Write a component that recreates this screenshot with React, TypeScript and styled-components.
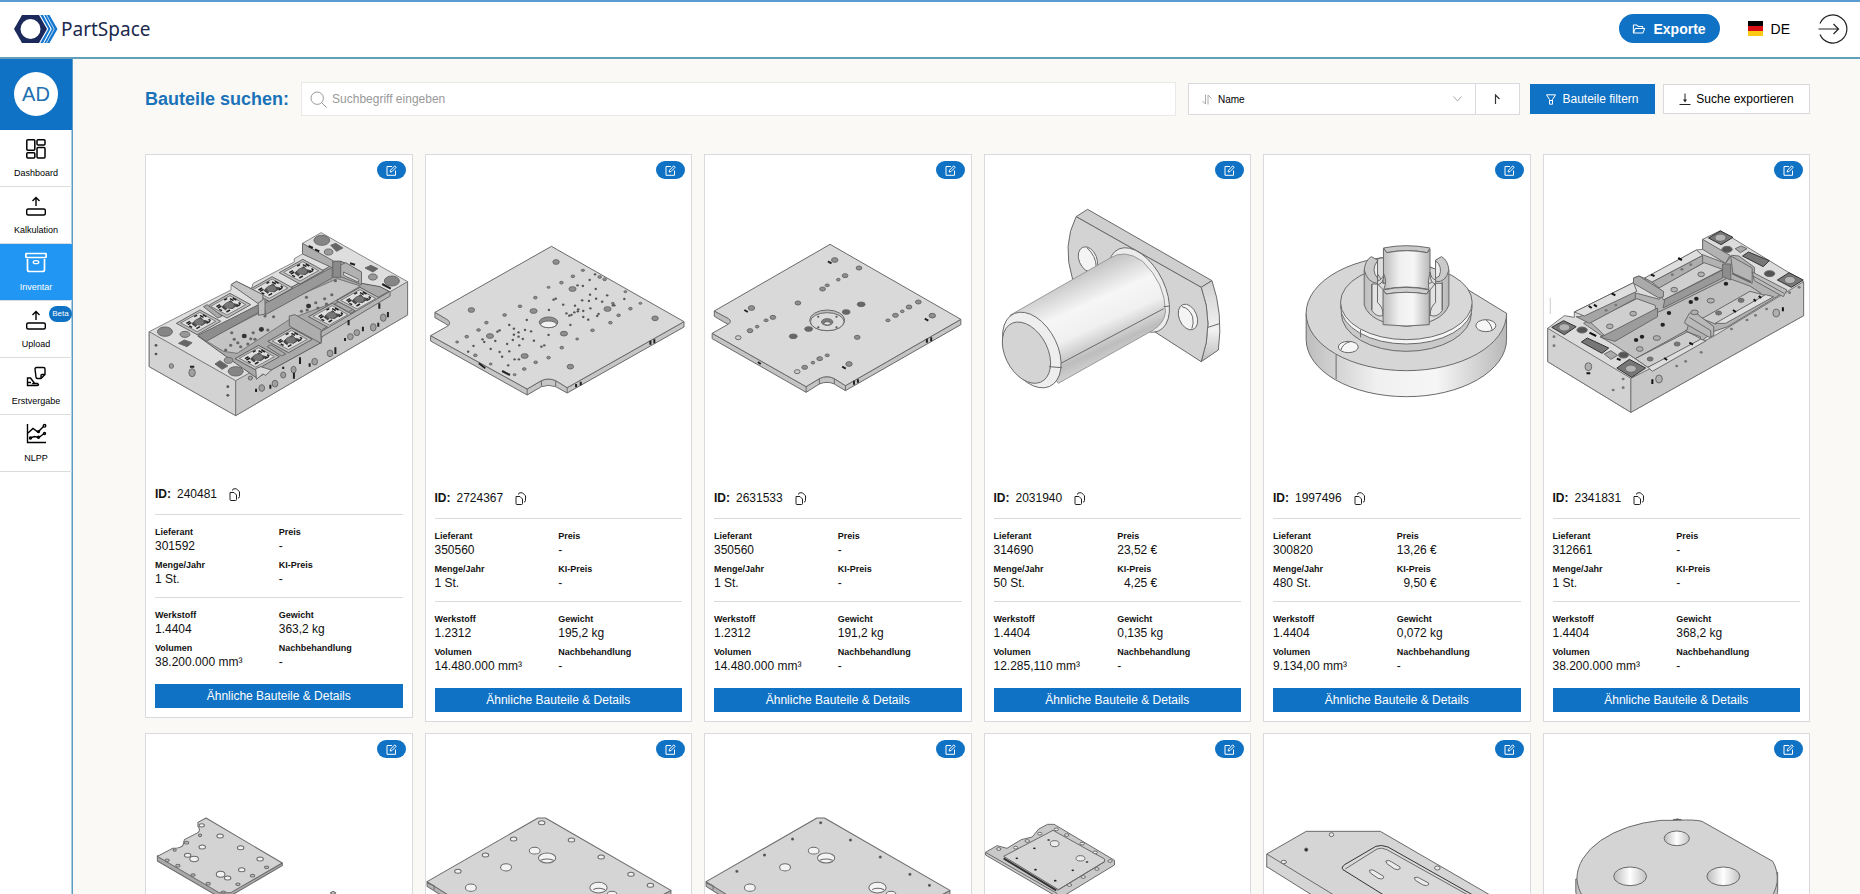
import React from "react";
import styled, { createGlobalStyle, css } from "styled-components";
import { AiOutlineFolderOpen } from "react-icons/ai";

const color = {
  primary: "#1072c4",
  active: "#2196f3",
  title: "#1a72b8",
  line: "#d9d9de",
  page: "#faf9f6",
  ink: "#111111",
  frame: "#5b9bc4",
};

const GlobalStyle = createGlobalStyle`
  *, *::before, *::after { box-sizing: border-box; }
  body {
    margin: 0;
    background: ${color.page};
    color: ${color.ink};
    font-family: "Liberation Sans", Arial, sans-serif;
    font-size: 12px;
  }
  button, input, select { font: inherit; color: inherit; }
  button { cursor: pointer; }
`;

/* ---------- page frame ---------- */

const Shell = styled.div`
  height: 100vh;
  display: flex;
  flex-direction: column;
`;

const Header = styled.header`
  flex: none;
  height: 59px;
  display: flex;
  align-items: center;
  justify-content: space-between;
  padding: 0 12px 2px 14px;
  background: #fff;
  border-top: 2px solid #5b9bd0;
  border-bottom: 2px solid #629fb9;
`;

const Brand = styled.a`
  display: flex;
  align-items: center;
  gap: 2px;
  color: #1b2a4e;
  font-family: "Noto Sans", sans-serif;
  font-size: 19px;
  line-height: 28px;
  text-decoration: none;
`;

const HeaderActions = styled.div`
  display: flex;
  align-items: center;
  gap: 28px;
`;

const ExportsButton = styled.button`
  display: flex;
  align-items: center;
  justify-content: center;
  gap: 7px;
  width: 101px;
  height: 29px;
  padding: 0;
  border: 0;
  border-radius: 15px;
  background: ${color.primary};
  color: #fff;
  font-size: 14px;
  font-weight: 700;
`;

const PlainButton = styled.button`
  display: flex;
  align-items: center;
  gap: 8px;
  padding: 0;
  border: 0;
  background: none;
  color: #000;
  font-size: 14px;
`;

const Body = styled.div`
  flex: 1;
  min-height: 0;
  display: flex;
`;

const Sidebar = styled.nav`
  flex: none;
  width: 73px;
  background: #fff;
  border-right: 1px solid ${color.frame};
  box-shadow: inset -1px 0 0 #a5cde4;
`;

const AvatarBox = styled.div`
  display: flex;
  align-items: center;
  justify-content: center;
  height: 71px;
  padding-bottom: 1px;
  background: ${color.primary};
`;

const Avatar = styled.div`
  width: 44px;
  height: 44px;
  border-radius: 50%;
  background: #fff;
  color: #2070b0;
  font-size: 20px;
  line-height: 44px;
  text-align: center;
`;

const NavLink = styled.a<{ $active?: boolean }>`
  position: relative;
  display: flex;
  flex-direction: column;
  align-items: center;
  gap: 7px;
  height: 57px;
  padding-top: 8px;
  border-bottom: 1px solid #dcdcdc;
  color: #000;
  font-size: 9px;
  line-height: 12px;
  text-decoration: none;
  ${(p) =>
    p.$active &&
    css`
      background: ${color.active};
      color: #fff;
    `}
`;

const BetaBadge = styled.span`
  position: absolute;
  top: 5px;
  right: 0;
  width: 23px;
  height: 16px;
  border-radius: 8px;
  background: ${color.primary};
  color: #fff;
  font-size: 8px;
  line-height: 16px;
  text-align: center;
`;

const Main = styled.main`
  flex: 1;
  min-width: 0;
  padding: 23px 50px 24px 72px;
  overflow-y: auto;
  scrollbar-width: none;
`;

/* ---------- toolbar ---------- */

const Toolbar = styled.form`
  display: flex;
  align-items: center;
  margin-bottom: 38px;
`;

const Title = styled.label`
  color: ${color.title};
  font-size: 18px;
  font-weight: 700;
`;

const SearchBox = styled.div`
  flex: 1;
  display: flex;
  align-items: center;
  gap: 5px;
  height: 34px;
  margin: 0 12px;
  padding: 0 8px;
  background: #fff;
  border: 1px solid #e9e9e9;
  color: #999;
`;

const SearchInput = styled.input`
  flex: 1;
  min-width: 0;
  padding: 0;
  border: 0;
  outline: 0;
  background: none;
  &::placeholder { color: #999; opacity: 1; }
`;

const SortGroup = styled.div`
  display: flex;
  height: 32px;
  margin-right: 10px;
`;

const SelectBox = styled.div`
  display: flex;
  align-items: center;
  gap: 6px;
  width: 288px;
  padding: 0 13px;
  background: #fff;
  border: 1px solid ${color.line};
  color: #aaa;
`;

const SortSelect = styled.select`
  flex: 1;
  appearance: none;
  padding: 0;
  border: 0;
  outline: 0;
  background: none;
  color: #000;
  font-size: 10px;
`;

const DirectionButton = styled.button`
  display: flex;
  align-items: center;
  justify-content: center;
  width: 44px;
  padding: 0;
  background: #fff;
  border: 1px solid ${color.line};
  border-left: 0;
`;

const ToolButton = styled.button<{ $primary?: boolean }>`
  display: flex;
  align-items: center;
  justify-content: center;
  gap: ${(p) => (p.$primary ? "6px" : "5px")};
  width: ${(p) => (p.$primary ? "125px" : "147px")};
  height: 30px;
  padding: 0;
  border: 1px solid ${(p) => (p.$primary ? color.primary : color.line)};
  background: ${(p) => (p.$primary ? color.primary : "#fff")};
  color: ${(p) => (p.$primary ? "#fff" : "#000")};
  & + & { margin-left: 8px; }
`;

/* ---------- part cards ---------- */

const Grid = styled.div`
  display: grid;
  grid-template-columns: repeat(6, minmax(0, 1fr));
  align-items: start;
  gap: 11px 12px;
`;

const Card = styled.article`
  position: relative;
  background: #fff;
  border: 1px solid ${color.line};
`;

const EditButton = styled.button`
  position: absolute;
  top: 6px;
  right: 6px;
  display: flex;
  align-items: center;
  justify-content: center;
  width: 29px;
  height: 18px;
  padding: 0;
  border: 0;
  border-radius: 9px;
  background: ${color.primary};
  color: #fff;
`;

const Drawing = styled.svg<{ $compact?: boolean }>`
  display: block;
  width: 100%;
  height: ${(p) => (p.$compact ? "308px" : "312px")};
  stroke: #6a6a6a;
  stroke-linejoin: round;
  * { vector-effect: non-scaling-stroke; }
`;

const CardBody = styled.div`
  padding: 20px 9px 9px;
`;

const IdRow = styled.div`
  display: flex;
  align-items: center;
  gap: 6px;
  height: 32px;
  padding-bottom: 9px;
  border-bottom: 1px solid ${color.line};
`;

const CopyButton = styled.button`
  display: flex;
  margin-left: 6px;
  padding: 0;
  border: 0;
  background: none;
`;

const Facts = styled.dl<{ $last?: boolean }>`
  display: grid;
  grid-template-columns: 1fr 1fr;
  row-gap: 5px;
  margin: 0;
  padding: 10px 0 ${(p) => (p.$last ? "15px" : "11px")};
  border-bottom: ${(p) => (p.$last ? "0" : `1px solid ${color.line}`)};
  line-height: 14px;
`;

const Fact = styled.div``;

const FactName = styled.dt`
  font-size: 9px;
  font-weight: 700;
`;

const FactValue = styled.dd`
  margin: 0;
  white-space: pre;
`;

const DetailsButton = styled.button`
  display: block;
  width: 100%;
  height: 24px;
  padding: 0;
  border: 0;
  background: ${color.primary};
  color: #fff;
`;

/* ---------- icons ---------- */

const LogoIcon = () => (
  <svg width="45" height="30" viewBox="0 0 45 30" aria-hidden="true">
    <path d="M8 1H25L33 15L25 29H8L0 15Z" fill="#1b2a5a" />
    <circle cx="16.500" cy="15" r="10" fill="#fff" />
    <path d="M26.300 1H29L36.500 15L29 29H26.300L34.300 15Z" fill="#1477cf" />
    <path d="M30.200 1H35.500L43.500 15L35.500 29H30.200L37.800 15Z" fill="#1477cf" />
    <path d="M32.500 1L40.200 15L32.500 29" fill="none" stroke="#fff" strokeWidth="0.700" />
  </svg>
);

const DashboardIcon = () => (
  <svg width="22" height="22" viewBox="0 0 22 22" fill="none" stroke="currentColor" strokeWidth="1.500" aria-hidden="true">
    <rect x="1.800" y="1.800" width="8" height="10.500" rx="1" />
    <rect x="12" y="1.800" width="8" height="5.200" rx="1" />
    <rect x="12" y="9.400" width="8" height="10.600" rx="1" />
    <rect x="1.800" y="14.700" width="8" height="5.300" rx="1" />
  </svg>
);

const UploadIcon = () => (
  <svg width="22" height="22" viewBox="0 0 22 22" fill="none" stroke="currentColor" strokeWidth="1.400" aria-hidden="true">
    <rect x="1.700" y="14" width="18.600" height="6" rx="1.500" />
    <path d="M11 11V2.500M7.500 6L11 2.500L14.500 6" />
  </svg>
);

const ArchiveIcon = () => (
  <svg width="22" height="22" viewBox="0 0 22 22" fill="none" stroke="currentColor" strokeWidth="1.700" aria-hidden="true">
    <rect x="0.900" y="1.500" width="20.200" height="4" rx="0.500" />
    <path d="M2.500 7V17.500Q2.500 19.500 4.500 19.500H17.500Q19.500 19.500 19.500 17.500V7" />
    <ellipse cx="11" cy="10.200" rx="2.800" ry="1.500" strokeWidth="1.300" />
  </svg>
);

const AwardIcon = () => (
  <svg width="22" height="22" viewBox="0 0 22 22" fill="none" stroke="currentColor" strokeWidth="1.400" aria-hidden="true">
    <path d="M11.500 1.500H18.500Q20 1.500 20 3V8.500L16 12.500H12.500Q11 12.500 11 11L10 3Q10 1.500 11.500 1.500ZM20 8.500H17Q16 8.500 16 9.500V12.500" />
    <path d="M2.500 12V19.500H12.500Q13.500 19.500 13.500 18.500L12.500 17.500H8L9 16.500L5.500 12ZM2.500 16.500H6" />
  </svg>
);

const TrendIcon = () => (
  <svg width="22" height="22" viewBox="0 0 22 22" fill="none" stroke="currentColor" strokeWidth="1.400" aria-hidden="true">
    <path d="M2.500 1V19.500H21" />
    <path d="M3 10L8 5.500L13 9L18.500 3.500" />
    <path d="M5 15L9.500 13.500L14 14.500L19 10.500" />
    <circle cx="19.500" cy="2.800" r="1.300" />
    <circle cx="13.500" cy="8.600" r="1" />
    <circle cx="5.500" cy="15" r="1" />
    <circle cx="13.500" cy="14.200" r="1" />
    <circle cx="19.500" cy="10.500" r="1" />
  </svg>
);

const LogoutIcon = () => (
  <svg width="30" height="30" viewBox="0 0 30 30" fill="none" stroke="#222" strokeWidth="1.200" aria-hidden="true">
    <path d="M2 9.500A14 14 0 1 1 2 20.500" />
    <path d="M0.500 15H20.500M15.500 10L20.500 15L15.500 20" />
  </svg>
);

const FlagIcon = () => (
  <svg width="15" height="15" viewBox="0 0 15 15" aria-hidden="true">
    <path d="M0 0H15V5H0Z" fill="#000" />
    <path d="M0 5H15V10H0Z" fill="#d80f16" />
    <path d="M0 10H15V15H0Z" fill="#fcc914" />
  </svg>
);

const SearchIcon = () => (
  <svg width="17" height="17" viewBox="0 0 17 17" fill="none" stroke="currentColor" aria-hidden="true">
    <circle cx="7.200" cy="7.200" r="6.200" />
    <path d="M11.700 11.700L16.500 16.500" />
  </svg>
);

const SortIcon = () => (
  <svg width="10" height="11" viewBox="0 0 10 11" fill="none" stroke="currentColor" aria-hidden="true">
    <path d="M3.500 0.500V10L0.500 7M6 10.500V1L9.500 4.500" />
  </svg>
);

const ChevronIcon = () => (
  <svg width="9" height="6" viewBox="0 0 9 6" fill="none" stroke="currentColor" aria-hidden="true">
    <path d="M0.500 0.500L4.500 5L8.500 0.500" />
  </svg>
);

const AscendingIcon = () => (
  <svg width="7" height="10" viewBox="0 0 7 10" fill="none" stroke="#333" strokeWidth="1.200" aria-hidden="true">
    <path d="M1.500 10V1L5.500 5" />
  </svg>
);

const FilterIcon = () => (
  <svg width="10" height="11" viewBox="0 0 10 11" fill="none" stroke="currentColor" aria-hidden="true">
    <path d="M0.500 0.800H9.500L6.500 5.500V10.200H3.500V5.500ZM3.500 6.500H6.500" />
  </svg>
);

const DownloadIcon = () => (
  <svg width="12" height="13" viewBox="0 0 12 13" fill="none" stroke="#222" aria-hidden="true">
    <path d="M6 0.500V8M0.500 11.500H11.500" />
    <path d="M4 6.500H8L6 9.500Z" fill="#222" stroke="none" />
  </svg>
);

const EditIcon = () => (
  <svg width="11" height="11" viewBox="0 0 11 11" fill="none" stroke="currentColor" aria-hidden="true">
    <path d="M6 1.500H1V10.300H9.500V5.500" />
    <path d="M4.200 7L4.500 5.200L8.700 0.900L10.200 2.300L6 6.600Z" />
  </svg>
);

const CopyIcon = () => (
  <svg width="12" height="13" viewBox="0 0 12 13" fill="none" stroke="#222" aria-hidden="true">
    <path d="M1 4.500H5L7.500 7V11.500Q7.500 12.500 6.500 12.500H2Q1 12.500 1 11.500Z" />
    <path d="M3.500 2.500Q3.500 0.800 5 0.800H7.500L10.500 3.800V8.500Q10.500 10 9 10" />
  </svg>
);

/* ---------- technical drawings ---------- */

type Hole = [number, number, number, number];

const Holes = ({ items, fill = "#8f8f8f" }: { items: Hole[]; fill?: string }) => (
  <g fill={fill}>
    {items.map(([x, y, rx, ry], i) => (
      <ellipse key={i} cx={x} cy={y} rx={rx} ry={ry} />
    ))}
  </g>
);

const Dots = ({ points, r = 3, fill = "#555" }: { points: number[][]; r?: number; fill?: string }) => (
  <g fill={fill} stroke="none">
    {points.map(([x, y], i) => (
      <circle key={i} cx={x} cy={y} r={r} />
    ))}
  </g>
);

const Insert = ({ x, y }: { x: number; y: number }) => (
  <g transform={`translate(${x} ${y})`} strokeWidth="0.800">
    <path d="M-62 6L4 -34L62 0L-4 40Z" fill="#bdbdbd" stroke="#4a4a4a" />
    <path d="M-50 5L4 -27L48 0L-4 31Z" fill="#dedede" stroke="#666" />
    <path d="M-14 2L6 -12L14 -3L26 0L10 12L-4 8L-8 16L-18 8Z" fill="#4a4a4a" stroke="#333" />
    <ellipse cx="2" cy="2" rx="13" ry="9" fill="#777" />
    <path d="M-34 6L-24 0M-30 10L-20 4M4 -18L14 -12M12 -20L22 -14M22 6L32 0M-6 22L4 16M28 -6L34 -2M-12 -14L-4 -18M-26 14L-18 18" stroke="#222" strokeWidth="1.500" />
  </g>
);

const MouldBase = () => (
  <Drawing $compact viewBox="45 15 743 924" preserveAspectRatio="none" role="img" aria-label="Bauteil 240481">
    <path d="M54 545L150 492L283 420V404L298 394L340 416L345 400L460 336V326L483 312V280L535 248L777 395V495L296 797L54 650Z" fill="#dedede" stroke="#888" />
    <path d="M54 545L296 692V797L54 650Z" fill="#d3d3d3" stroke="#777" />
    <path d="M296 692L355 657L535 545L777 395V495L296 797Z" fill="#c6c6c6" stroke="#777" />
    <path d="M190 558L375 456L555 352L566 334H590L604 340L648 366V400L700 410L725 424L540 538L535 578L355 684L296 640Z" fill="#a9a9a9" stroke="#5a5a5a" />
    <path d="M212 572L368 486L580 386L645 408L560 462L450 506L300 610L262 604Z" fill="#c4c4c4" stroke="#777" />
    <path d="M190 556L365 462V484L214 574Z" fill="#8d8d8d" />
    <path d="M375 462L566 352V384L380 494Z" fill="#999" />
    <Insert x={192} y={514} />
    <Insert x={276} y={464} />
    <Insert x={394} y={414} />
    <Insert x={480} y={362} />
    <Insert x={640} y={446} />
    <Insert x={562} y={494} />
    <Insert x={448} y={568} />
    <Insert x={356} y={620} />
    <path d="M358 440L378 448V492L360 496Z" fill="#bdbdbd" />
    <path d="M283 404L298 394L372 434V450L358 460Z" fill="#c4c4c4" />
    <path d="M483 280L568 332V354L483 312Z" fill="#adadad" />
    <path d="M568 334H590V382H568Z" fill="#8b8b8b" />
    <path d="M590 345L604 338L648 366V404L590 380Z" fill="#b1b1b1" />
    <path d="M598 366L640 388V397L598 376Z" fill="#dcdcdc" />
    <path d="M446 498L462 494L535 540V580L446 528Z" fill="#adadad" />
    <path d="M535 545L728 424V438L535 562Z" fill="#b4b4b4" />
    <path d="M206 470L216 464L258 498L246 504ZM572 462L584 456L624 478L612 486ZM384 590L394 584L436 612L424 618Z" fill="#aaa" />
    <path d="M352 656L366 650L396 660L380 676L372 672L354 688Z" fill="#d8d8d8" />
    <Holes items={[[98, 545, 21, 14], [537, 271, 22, 15], [733, 393, 21, 15], [296, 664, 21, 14]]} fill="#858585" />
    <Holes items={[[154, 553, 14, 9], [276, 631, 12, 9], [556, 306, 12, 9], [680, 381, 12, 9]]} fill="#999" />
    <path d="M136 580L152 570L174 578L160 590ZM238 642L252 632L274 648L258 658ZM562 286L576 280L596 294L578 304ZM658 354L674 346L694 356L680 366Z" fill="#666" />
    <Holes items={[[116, 648, 6, 7], [174, 668, 9, 12], [369, 714, 8, 10], [406, 701, 8, 10], [429, 675, 7, 9], [458, 659, 7, 10], [517, 635, 8, 10], [560, 610, 8, 10], [617, 560, 8, 9], [635, 548, 8, 9], [681, 532, 8, 11], [709, 503, 8, 11], [337, 684, 6, 6]]} fill="#a0a0a0" />
    <Dots r={4} fill="#555" points={[[73, 586], [73, 612], [274, 710], [274, 736]]} />
    <path d="M353 716V726M393 704V716M476 622V642M459 668V686M429 650V657M503 640V650M575 592V612M602 564V573M612 510V526M652 530V544M695 518V530M698 460V476M722 486V502M168 650H180M500 288L512 294M518 298L530 304M616 340L630 344M706 402L730 416" stroke="#222" strokeWidth="2" />
    <Dots r={4.5} fill="#666" points={[[285, 548], [302, 578], [318, 558], [330, 582], [345, 548], [367, 540], [386, 540], [268, 600], [282, 586], [310, 590], [292, 568], [402, 500], [378, 498], [480, 484], [496, 480], [500, 466], [520, 458], [545, 446], [565, 434], [550, 462], [494, 442], [526, 474], [575, 392], [338, 566], [350, 568]]} />
    <Dots r={7} fill="#333" points={[[320, 558], [500, 468], [368, 538]]} />
  </Drawing>
);

const PerforatedPlate = () => (
  <Drawing viewBox="827 15 743 936" preserveAspectRatio="none" role="img" aria-label="Bauteil 2724367">
    <path d="M852 487L895 512V530L878 519L852 503Z" fill="#bdbdbd" />
    <path d="M840 557V573L1110 735L1150 710Q1170 702 1190 710L1222 729L1549 531V515L1222 713L1190 692Q1170 682 1150 692L1110 717Z" fill="#c6c6c6" />
    <path d="M1178 289L1549 515L1222 713L1190 692Q1170 682 1150 692L1110 717L840 557L888 528Q898 520 888 510L852 487Z" fill="#d9d9d9" />
    <path d="M1110 717V735M1222 713V729M1150 692V708M1190 692V708" />
    <ellipse cx="1170" cy="517" rx="26" ry="16" fill="#8c8c8c" />
    <ellipse cx="1170" cy="523" rx="22" ry="10" fill="#f2f2f2" />
    <Holes items={[[1191, 336, 9, 7], [954, 480, 9, 7], [1468, 505, 9, 7], [1231, 650, 9, 7], [1237, 417, 10, 7], [1335, 477, 10, 7], [1128, 483, 10, 7], [1006, 558, 10, 7], [1213, 551, 10, 7], [1103, 618, 10, 7]]} />
    <Holes items={[[1133, 443, 5, 4], [1090, 469, 5, 4], [1047, 495, 5, 4], [996, 518, 5, 4], [974, 540, 5, 4], [941, 560, 5, 4], [914, 576, 4, 3], [1266, 361, 5, 3], [1238, 379, 5, 4], [1206, 398, 5, 4], [1170, 412, 4, 3], [1313, 381, 5, 4], [1327, 388, 5, 4], [1385, 425, 4, 3], [1427, 460, 4, 3], [1399, 476, 5, 4], [1366, 496, 5, 4], [1343, 518, 5, 4], [1293, 541, 5, 4], [1250, 567, 4, 3], [1207, 593, 5, 4], [1170, 623, 5, 4], [1134, 637, 5, 4], [1102, 657, 5, 4], [965, 616, 5, 4], [1008, 642, 4, 3], [1075, 674, 4, 3], [1350, 460, 4, 3]]} />
    <Dots r={3.5} points={[[1300, 373], [1285, 390], [1266, 408], [1251, 406], [1302, 417], [1334, 436], [1303, 446], [1283, 453], [1264, 451], [1244, 467], [1253, 478], [1267, 483], [1287, 475], [1310, 492], [1306, 498], [1281, 509], [1267, 501], [1220, 490], [1234, 495], [1252, 484], [1211, 464], [1190, 446], [1184, 449], [1171, 480], [1109, 510], [1231, 525], [1320, 455], [1350, 466], [1354, 466], [1382, 447], [1286, 434], [1060, 525], [1033, 541], [1027, 545], [1073, 536], [1086, 547], [1104, 540], [1121, 544], [1073, 554], [1086, 560], [1098, 567], [1070, 570], [1054, 582], [1088, 586], [1129, 572], [1158, 586], [1150, 590], [1008, 597], [1033, 606], [1040, 620], [1060, 604], [1075, 628], [1087, 628], [1057, 646], [985, 568], [990, 576], [960, 588], [945, 605], [1170, 555], [1242, 487], [1228, 497], [1021, 573]]} />
    <path d="M975 640L993 655M1040 663L1062 675M1455 572V584M1466 568V580M1247 702V712M1260 695V706" stroke="#222" strokeWidth="2" />
  </Drawing>
);

const CentredPlate = () => (
  <Drawing viewBox="42 15 743 936" preserveAspectRatio="none" role="img" aria-label="Bauteil 2631533">
    <path d="M68 483L114 508V526L98 518L68 499Z" fill="#bdbdbd" />
    <path d="M62 550V566L325 727L362 702Q384 692 404 702L435 722L758 524V508L435 707L404 686Q384 674 362 686L325 710Z" fill="#c4c4c4" />
    <path d="M392 283L758 508L435 707L404 686Q384 674 362 686L325 710L62 550L108 522Q118 514 108 506L68 483Z" fill="#d9d9d9" />
    <path d="M325 710V727M435 707V722M362 686V702M404 686V702" />
    <ellipse cx="384" cy="511" rx="49" ry="31" fill="#bfbfbf" />
    <ellipse cx="384" cy="515" rx="47" ry="27" fill="#dcdcdc" />
    <ellipse cx="384" cy="516" rx="16" ry="10" fill="#7c7c7c" />
    <ellipse cx="384" cy="520" rx="9" ry="5" fill="#e8e8e8" />
    <Holes items={[[405, 330, 9, 7], [172, 474, 9, 7], [678, 497, 9, 7], [445, 642, 9, 7], [473, 354, 8, 6], [434, 377, 8, 6], [371, 417, 8, 6], [232, 502, 8, 6], [168, 542, 8, 6], [639, 456, 8, 6], [613, 471, 8, 6], [575, 496, 8, 6], [363, 626, 8, 6], [321, 652, 8, 6], [468, 562, 8, 6], [302, 459, 8, 6]]} />
    <Holes fill="#ccc" items={[[135, 563, 8, 6], [300, 665, 8, 6]]} />
    <Holes fill="#666" items={[[479, 463, 11, 7], [437, 486, 11, 7], [332, 537, 11, 7], [289, 559, 11, 7]]} />
    <Holes items={[[415, 389, 5, 4], [384, 406, 6, 4], [213, 511, 6, 4], [188, 530, 5, 4], [594, 484, 5, 4], [554, 511, 6, 4], [384, 616, 6, 4], [344, 638, 5, 4]]} />
    <Dots r={3} points={[[359, 500], [410, 500], [359, 532], [410, 532]]} />
    <path d="M386 334L396 340M152 480L162 486M657 506L667 512M426 650L436 656M190 636L198 642M663 566V578M675 562V574M459 692V704M470 688V698" stroke="#222" strokeWidth="2" />
  </Drawing>
);

const FlangePin = () => (
  <Drawing viewBox="825 15 743 936" preserveAspectRatio="none" role="img" aria-label="Bauteil 2031940">
    <defs>
      <linearGradient id="pin-body" gradientUnits="userSpaceOnUse" x1="1040" y1="390" x2="1160" y2="640">
        <stop offset="0" stopColor="#c4c4c4" />
        <stop offset="0.350" stopColor="#f6f6f6" />
        <stop offset="0.600" stopColor="#f0f0f0" />
        <stop offset="0.850" stopColor="#bdbdbd" />
        <stop offset="1" stopColor="#d2d2d2" />
      </linearGradient>
      <linearGradient id="pin-edge" x1="0" y1="0" x2="0" y2="1">
        <stop offset="0" stopColor="#d0d0d0" />
        <stop offset="0.600" stopColor="#f2f2f2" />
        <stop offset="1" stopColor="#bcbcbc" />
      </linearGradient>
    </defs>
    <path d="M1080 200L1112 178L1460 392L1430 412Z" fill="#cfcfcf" />
    <path d="M1430 412L1460 392Q1492 490 1478 600L1430 635Q1468 520 1430 412Z" fill="url(#pin-edge)" />
    <path d="M1080 200L1430 412Q1468 520 1430 635L1070 387Q1040 285 1080 200Z" fill="#d3d3d3" />
    <path d="M1449 532L1481 521" />
    <ellipse cx="1113" cy="328" rx="25" ry="39" transform="rotate(-20 1113 328)" fill="#f4f4f4" />
    <path d="M1110 293Q1136 318 1136 350" fill="none" />
    <ellipse cx="1393" cy="501" rx="25" ry="40" transform="rotate(-20 1393 501)" fill="#f4f4f4" />
    <path d="M1376 470Q1396 474 1406 500Q1410 520 1404 536" fill="none" />
    <ellipse cx="1255" cy="420" rx="73" ry="135" transform="rotate(-24 1255 420)" fill="#ececec" />
    <path d="M895 496L1172 326Q1215 294 1266 334Q1330 400 1330 486Q1326 520 1296 540L1030 700Z" fill="url(#pin-body)" stroke="#999" />
    <path d="M1020 650L1325 476M1325 470L1342 468" fill="none" />
    <ellipse cx="956" cy="600" rx="72" ry="120" transform="rotate(-24 956 600)" fill="#eeeeee" />
    <ellipse cx="941" cy="608" rx="60" ry="97" transform="rotate(-24 941 608)" fill="#d4d4d4" />
    <path d="M1004 650L1040 653" />
  </Drawing>
);

const CollarDisc = () => (
  <Drawing viewBox="38 15 718 936" preserveAspectRatio="none" role="img" aria-label="Bauteil 1997496">
    <defs>
      <linearGradient id="disc-side">
        <stop offset="0" stopColor="#bdbdbd" />
        <stop offset="0.350" stopColor="#f0f0f0" />
        <stop offset="0.650" stopColor="#f6f6f6" />
        <stop offset="1" stopColor="#b8b8b8" />
      </linearGradient>
    </defs>
    <path d="M152 490V568A271 172 0 0 0 694 568V490Z" fill="url(#disc-side)" />
    <path d="M694 490A271 172 0 0 1 152 490A271 172 0 0 1 440 318Z" fill="#d6d6d6" />
    <path d="M233 614V688" />
    <ellipse cx="423" cy="490" rx="176" ry="114" fill="#c9c9c9" />
    <ellipse cx="423" cy="470" rx="178" ry="112" fill="#f5f5f5" />
    <ellipse cx="423" cy="457" rx="178" ry="112" fill="#d8d8d8" />
    <path d="M299 540V562" />
    <path d="M309 360V465Q325 520 423 529Q520 520 538 465V360L487 400H360Z" fill="url(#disc-side)" />
    <path d="M345 328Q360 320 362 326V400L345 372Z" fill="#ddd" />
    <path d="M361 294Q423 280 487 294L480 308Q423 296 370 308Z" fill="#c8c8c8" />
    <path d="M361 294L370 308Q423 296 480 308L487 298V372Q480 390 484 418Q423 404 362 418Q372 390 361 372Z" fill="url(#disc-side)" />
    <path d="M309 360Q312 330 328 320L345 330V400Q318 398 309 360ZM538 360Q535 330 518 320L502 330V395Q530 398 538 360Z" fill="#cacaca" />
    <path d="M345 332Q326 360 345 385ZM502 332Q522 350 512 378L502 385Z" fill="#eee" />
    <path d="M362 378Q360 402 345 404V393Q358 390 362 372ZM487 372Q488 400 502 402V390Q490 386 487 366Z" fill="#ddd" />
    <path d="M330 402H345L361 420V496Q344 504 330 482ZM487 420L502 400H520V482Q506 504 487 496Z" fill="#e3e3e3" />
    <path d="M329 402V480M345 402V458Q360 470 360 496M502 400V458Q488 470 487 496M520 395V480" fill="none" />
    <path d="M360 420Q423 404 485 420L478 432Q423 422 368 432Z" fill="#cfcfcf" />
    <path d="M360 420L368 432Q423 422 478 432L485 420V524Q423 532 360 524Z" fill="url(#disc-side)" />
    <ellipse cx="266" cy="591" rx="27" ry="17" fill="#f6f6f6" />
    <path d="M246 601Q250 580 272 575" fill="none" />
    <ellipse cx="638" cy="527" rx="27" ry="18" fill="#f6f6f6" />
    <path d="M655 540Q652 520 638 510" fill="none" />
    <path d="M65 960V972" stroke="#999" />
  </Drawing>
);

const PocketBase = () => (
  <Drawing viewBox="793 15 718 936" preserveAspectRatio="none" role="img" aria-label="Bauteil 2341831">
    <path d="M803 535L848 497L875 502V486L1035 398V384L1050 378L1068 386L1205 300L1222 298V268L1270 242L1495 395V497L1028 787L803 635Z" fill="#dcdcdc" stroke="#777" />
    <path d="M803 535L1028 685V787L803 635Z" fill="#d2d2d2" stroke="#777" />
    <path d="M1028 685L1250 560L1495 395V497L1028 787Z" fill="#c7c7c7" stroke="#777" />
    <path d="M900 520L1045 430L1105 448L1112 432L1065 388L1222 314L1284 340L1300 316L1320 318L1362 352V380L1446 424L1290 530L1250 545L1216 576L1074 652Z" fill="#b2b2b2" />
    <path d="M945 560L1115 480L1290 384L1350 408L1380 430L1256 520L1190 490L1180 540L1040 626L985 586Z" fill="#c1c1c1" />
    <path d="M918 516L1044 446L1094 466V486L960 560Z" fill="#cfcfcf" />
    <path d="M890 500L1040 424V446L916 520L880 500Z" fill="#a5a5a5" />
    <path d="M1100 414L1226 338L1276 358L1116 450Z" fill="#cfcfcf" />
    <path d="M1085 396L1222 316V340L1104 414Z" fill="#adadad" />
    <path d="M1120 448L1276 360V384L1115 474Z" fill="#999" />
    <path d="M946 562L1100 474V500L985 574Z" fill="#9c9c9c" />
    <path d="M1040 626L1180 546L1216 560V574L1074 652Z" fill="#cdcdcd" />
    <path d="M1220 506L1350 424L1392 436L1256 522Z" fill="#cdcdcd" />
    <path d="M1035 384L1050 378L1116 424V440L1104 444L1035 400Z" fill="#aaa" />
    <path d="M1174 514L1186 490L1200 486L1252 530V556L1240 562L1174 520Z" fill="#b9b9b9" />
    <path d="M1186 502L1244 542V562M1174 540L1216 566" fill="none" />
    <path d="M1276 342H1298V390L1276 380Z" fill="#8d8d8d" />
    <path d="M1298 318L1356 354V400L1304 372Z" fill="#b5b5b5" />
    <path d="M1302 370L1352 396" strokeWidth="2" />
    <path d="M1222 268L1296 316L1284 340L1222 298Z" fill="#b2b2b2" />
    <path d="M1356 366L1450 420L1440 440L1362 392Z" fill="#bcbcbc" />
    <path d="M1358 378L1442 430" />
    <path d="M875 486L1035 398L1044 424L902 498Z" fill="#dedede" />
    <path d="M1065 384L1205 300L1222 316L1085 396Z" fill="#dedede" />
    <path d="M1256 520L1392 434L1414 440L1284 520Z" fill="#dedede" />
    <path d="M1074 652L1216 568L1232 572L1086 664Z" fill="#dedede" />
    <g fill="#777" stroke="#333">
      <path d="M1238 264L1270 243L1304 262L1272 284ZM1424 390L1456 368L1494 390L1462 412ZM814 532L846 512L880 530L848 554ZM990 654L1024 628L1068 654L1030 682Z" />
      <path d="M1330 318L1346 306L1402 332L1386 350ZM894 576L910 564L968 594L950 610Z" />
    </g>
    <Holes fill="#b3b3b3" items={[[1270, 263, 15, 11], [1458, 390, 15, 11], [848, 532, 15, 11], [1028, 656, 15, 11]]} />
    <Holes fill="#555" items={[[1288, 298, 14, 9], [1403, 371, 14, 9], [896, 540, 14, 9], [1008, 615, 13, 9]]} />
    <path d="M1310 296L1326 288L1342 296L1324 308ZM956 612L974 602L992 616L974 628Z" fill="#aaa" />
    <Holes fill="#b0b0b0" items={[[1218, 373, 9, 7], [1145, 419, 9, 7], [1034, 491, 9, 7], [971, 529, 9, 7], [1244, 452, 10, 7], [1098, 564, 10, 7], [1052, 597, 9, 7], [1200, 487, 10, 7], [913, 650, 9, 12], [1421, 489, 9, 12], [1104, 687, 9, 12]]} />
    <Holes fill="#777" items={[[1265, 489, 8, 6], [1326, 451, 8, 6], [1153, 582, 8, 6], [1080, 627, 8, 6]]} />
    <Dots r={6} fill="#222" points={[[1285, 401], [1205, 446], [1190, 456], [1131, 489], [1114, 524], [1058, 560], [1042, 570]]} />
    <Dots r={4} fill="#777" points={[[820, 560], [820, 587], [1007, 687], [1007, 713], [980, 720], [1152, 648], [1176, 634], [1218, 607], [1300, 537], [1342, 510], [1365, 496], [1395, 477], [1457, 428], [1483, 412], [987, 465], [961, 481], [1140, 374], [1166, 358], [1190, 344]]} />
    <path d="M908 670H918M1086 688V702M1439 472V484M976 430L986 436M914 468L922 474M928 464L936 470M1082 374L1092 378M1156 324L1166 330M1360 448L1366 454M1374 438L1380 444M1304 480L1312 486M1186 578L1196 584M1118 624L1126 630M916 548L934 558M990 626L1000 630" stroke="#111" strokeWidth="2" />
    <path d="M810 443V492" stroke="#ccc" />
  </Drawing>
);

const NotchedPlate = () => (
  <Drawing viewBox="29 45 491 936" preserveAspectRatio="none" role="img" aria-label="Bauteil mit Aussparung">
    <path d="M50 410V426L160 530H186L281 440V432L175 515Z" fill="#a9a9a9" />
    <path d="M140 297L281 432L186 521H164L50 412L78 388Q96 388 98 376L100 362L126 340Q130 330 125 322V310Z" fill="#d3d3d3" />
    <Holes fill="#f2f2f2" items={[[166, 351, 6, 6], [133, 384, 6, 6], [204, 386, 6, 6], [106, 409, 6, 6], [118, 420, 8, 8], [240, 420, 6, 6], [206, 452, 6, 6], [167, 466, 8, 9], [180, 477, 6, 6], [132, 319, 5, 5]]} />
    <Holes fill="#bbb" items={[[129, 349, 3, 4], [104, 371, 4, 4], [82, 393, 3, 4], [68, 424, 4, 4], [88, 440, 4, 4], [116, 468, 4, 4], [144, 494, 4, 4], [199, 496, 4, 4], [226, 470, 4, 4], [252, 445, 4, 4], [172, 519, 4, 3]]} />
    <path d="M370 521L375 517L380 521L375 530Z" fill="#bbb" />
  </Drawing>
);

const DiamondPlate = ({ label, solid }: { label: string; solid?: boolean }) => (
  <Drawing viewBox="545 45 491 936" preserveAspectRatio="none" role="img" aria-label={label}>
    <path d="M547 488V502L760 720H780L998 528V515L770 700Z" fill="#b5b5b5" />
    <path d="M752 297H766L998 514L780 708H762L547 488Z" fill="#d5d5d5" />
    <path d="M547 492L560 500V512" fill="none" />
    <Holes
      fill={solid ? "#222" : "#f0f0f0"}
      items={[[759, 311], [707, 360], [814, 363], [655, 408], [869, 414], [604, 457], [924, 466], [960, 499]].map(
        ([x, y]) => [x, y, solid ? 2 : 6, solid ? 3 : 6] as Hole
      )}
    />
    <Holes fill="#f3f3f3" items={[[746, 395, 10, 10], [769, 417, 16, 15], [693, 445, 10, 11], [628, 506, 10, 11], [864, 506, 16, 16], [889, 526, 9, 9]]} />
    <path d="M757 424Q769 416 781 424M854 512Q864 504 876 512" fill="none" />
  </Drawing>
);

const CoverPlate = () => (
  <Drawing viewBox="26 45 484 936" preserveAspectRatio="none" role="img" aria-label="Deckelplatte">
    <path d="M27 400L48 380L66 388L92 362L112 354L124 330L140 316H152L262 424V438L170 530H154L27 408Z" fill="#c9c9c9" />
    <path d="M60 412L150 334L244 420V428L160 512Z" fill="#d6d6d6" />
    <path d="M60 418L156 514" stroke="#333" strokeWidth="2" />
    <path d="M27 400L158 524M244 428L158 514" fill="none" />
    <Holes fill="#ededed" items={[[153, 374, 8, 9], [200, 418, 8, 8], [51, 390, 4, 4], [82, 386, 4, 4], [103, 366, 4, 4], [126, 344, 4, 4], [156, 331, 4, 4], [175, 348, 4, 4], [203, 374, 4, 4], [227, 400, 4, 4], [254, 426, 4, 4], [230, 450, 4, 4], [205, 474, 4, 4], [180, 498, 4, 4]]} />
    <Dots r={2.5} fill="#222" points={[[142, 363], [116, 388], [84, 418], [118, 452], [154, 485], [186, 454], [212, 429]]} />
  </Drawing>
);

const SlottedPlate = () => (
  <Drawing viewBox="536 45 484 936" preserveAspectRatio="none" role="img" aria-label="Platte mit Langlöchern">
    <path d="M541 405L613 337H748L990 568V640L760 800L541 445Z" fill="#d5d5d5" />
    <path d="M541 443L640 545L760 800L541 600Z" fill="#fff" stroke="none" />
    <path d="M541 405L720 585M541 443L640 545" fill="none" />
    <path d="M740 382Q750 376 762 384L935 545L800 575L680 452Q676 444 684 436Z" fill="#d9d9d9" stroke="#333" />
    <path d="M684 450L742 390Q750 384 760 392L910 530" fill="none" />
    <g fill="#ececec">
      <path d="M758 426Q764 422 768 428L784 444Q786 450 780 452L774 450L760 434ZM728 454Q734 450 738 456L754 472Q756 478 750 480L744 478L730 462ZM810 476Q816 472 820 478L836 492Q838 498 832 500L826 498L812 484Z" />
    </g>
    <Holes fill="#ececec" items={[[659, 347, 4, 6], [572, 429, 5, 5], [852, 447, 5, 6]]} />
    <Holes fill="#222" items={[[613, 392, 3, 5]]} />
  </Drawing>
);

const ThreeHoleDisc = () => (
  <Drawing viewBox="1045 45 484 936" preserveAspectRatio="none" role="img" aria-label="Scheibe mit drei Bohrungen">
    <defs>
      <linearGradient id="bore">
        <stop offset="0" stopColor="#bcbcbc" />
        <stop offset="0.500" stopColor="#ffffff" />
        <stop offset="1" stopColor="#c2c2c2" />
      </linearGradient>
    </defs>
    <path d="M1103 480V520Q1120 670 1288 690Q1450 670 1471 520V460Z" fill="#c4c4c4" />
    <path d="M1105 480A183 178 0 0 1 1258 304H1288Q1320 301 1333 307L1462 427Q1472 455 1470 490A183 178 0 0 1 1105 480Z" fill="#d4d4d4" />
    <path d="M1280 302Q1288 298 1296 302" />
    <Holes fill="url(#bore)" items={[[1287, 358, 23, 22], [1202, 472, 30, 28], [1372, 472, 30, 28]]} />
  </Drawing>
);

/* ---------- data ---------- */

const navItems = [
  { label: "Dashboard", icon: <DashboardIcon /> },
  { label: "Kalkulation", icon: <UploadIcon /> },
  { label: "Inventar", icon: <ArchiveIcon />, active: true },
  { label: "Upload", icon: <UploadIcon />, beta: true },
  { label: "Erstvergabe", icon: <AwardIcon /> },
  { label: "NLPP", icon: <TrendIcon /> },
];

type Part = {
  id: string;
  supplier: string;
  price: string;
  amount: string;
  aiPrice: string;
  material: string;
  weight: string;
  volume: string;
  drawing: React.ReactNode;
};

const parts: Part[] = [
  { id: "240481", supplier: "301592", price: "-", amount: "1 St.", aiPrice: "-", material: "1.4404", weight: "363,2 kg", volume: "38.200.000 mm³", drawing: <MouldBase /> },
  { id: "2724367", supplier: "350560", price: "-", amount: "1 St.", aiPrice: "-", material: "1.2312", weight: "195,2 kg", volume: "14.480.000 mm³", drawing: <PerforatedPlate /> },
  { id: "2631533", supplier: "350560", price: "-", amount: "1 St.", aiPrice: "-", material: "1.2312", weight: "191,2 kg", volume: "14.480.000 mm³", drawing: <CentredPlate /> },
  { id: "2031940", supplier: "314690", price: "23,52 €", amount: "50 St.", aiPrice: "\u00a0\u00a04,25 €", material: "1.4404", weight: "0,135 kg", volume: "12.285,110 mm³", drawing: <FlangePin /> },
  { id: "1997496", supplier: "300820", price: "13,26 €", amount: "480 St.", aiPrice: "\u00a0\u00a09,50 €", material: "1.4404", weight: "0,072 kg", volume: "9.134,00 mm³", drawing: <CollarDisc /> },
  { id: "2341831", supplier: "312661", price: "-", amount: "1 St.", aiPrice: "-", material: "1.4404", weight: "368,2 kg", volume: "38.200.000 mm³", drawing: <PocketBase /> },
];

const previews = [
  <NotchedPlate />,
  <DiamondPlate label="Platte mit Durchgangsbohrungen" />,
  <DiamondPlate label="Platte mit Gewindebohrungen" solid />,
  <CoverPlate />,
  <SlottedPlate />,
  <ThreeHoleDisc />,
];

const FactItem = ({ name, value }: { name: string; value: string }) => (
  <Fact>
    <FactName>{name}</FactName>
    <FactValue>{value}</FactValue>
  </Fact>
);

const PartCard = ({ part }: { part: Part }) => (
  <Card>
    {part.drawing}
    <EditButton type="button" aria-label="Bearbeiten">
      <EditIcon />
    </EditButton>
    <CardBody>
      <IdRow>
        <strong>ID:</strong>
        <span>{part.id}</span>
        <CopyButton type="button" aria-label="ID kopieren">
          <CopyIcon />
        </CopyButton>
      </IdRow>
      <Facts>
        <FactItem name="Lieferant" value={part.supplier} />
        <FactItem name="Preis" value={part.price} />
        <FactItem name="Menge/Jahr" value={part.amount} />
        <FactItem name="KI-Preis" value={part.aiPrice} />
      </Facts>
      <Facts $last>
        <FactItem name="Werkstoff" value={part.material} />
        <FactItem name="Gewicht" value={part.weight} />
        <FactItem name="Volumen" value={part.volume} />
        <FactItem name="Nachbehandlung" value="-" />
      </Facts>
      <DetailsButton type="button">Ähnliche Bauteile &amp; Details</DetailsButton>
    </CardBody>
  </Card>
);

export default function App() {
  return (
    <Shell>
      <GlobalStyle />
      <Header>
        <Brand href="#">
          <LogoIcon />
          PartSpace
        </Brand>
        <HeaderActions>
          <ExportsButton type="button">
            <AiOutlineFolderOpen size={14} />
            Exporte
          </ExportsButton>
          <PlainButton type="button">
            <FlagIcon />
            DE
          </PlainButton>
          <PlainButton type="button" aria-label="Abmelden">
            <LogoutIcon />
          </PlainButton>
        </HeaderActions>
      </Header>
      <Body>
        <Sidebar>
          <AvatarBox>
            <Avatar>AD</Avatar>
          </AvatarBox>
          {navItems.map((item) => (
            <NavLink key={item.label} href="#" $active={item.active}>
              {item.icon}
              {item.label}
              {item.beta && <BetaBadge>Beta</BetaBadge>}
            </NavLink>
          ))}
        </Sidebar>
        <Main>
          <Toolbar>
            <Title htmlFor="search">Bauteile suchen:</Title>
            <SearchBox>
              <SearchIcon />
              <SearchInput id="search" type="text" placeholder="Suchbegriff eingeben" />
            </SearchBox>
            <SortGroup>
              <SelectBox>
                <SortIcon />
                <SortSelect aria-label="Sortieren nach" defaultValue="name">
                  <option value="name">Name</option>
                </SortSelect>
                <ChevronIcon />
              </SelectBox>
              <DirectionButton type="button" aria-label="Aufsteigend">
                <AscendingIcon />
              </DirectionButton>
            </SortGroup>
            <ToolButton type="button" $primary>
              <FilterIcon />
              Bauteile filtern
            </ToolButton>
            <ToolButton type="button">
              <DownloadIcon />
              Suche exportieren
            </ToolButton>
          </Toolbar>
          <Grid>
            {parts.map((part) => (
              <PartCard key={part.id} part={part} />
            ))}
            {previews.map((drawing, i) => (
              <Card key={i}>
                {drawing}
                <EditButton type="button" aria-label="Bearbeiten">
                  <EditIcon />
                </EditButton>
              </Card>
            ))}
          </Grid>
        </Main>
      </Body>
    </Shell>
  );
}
